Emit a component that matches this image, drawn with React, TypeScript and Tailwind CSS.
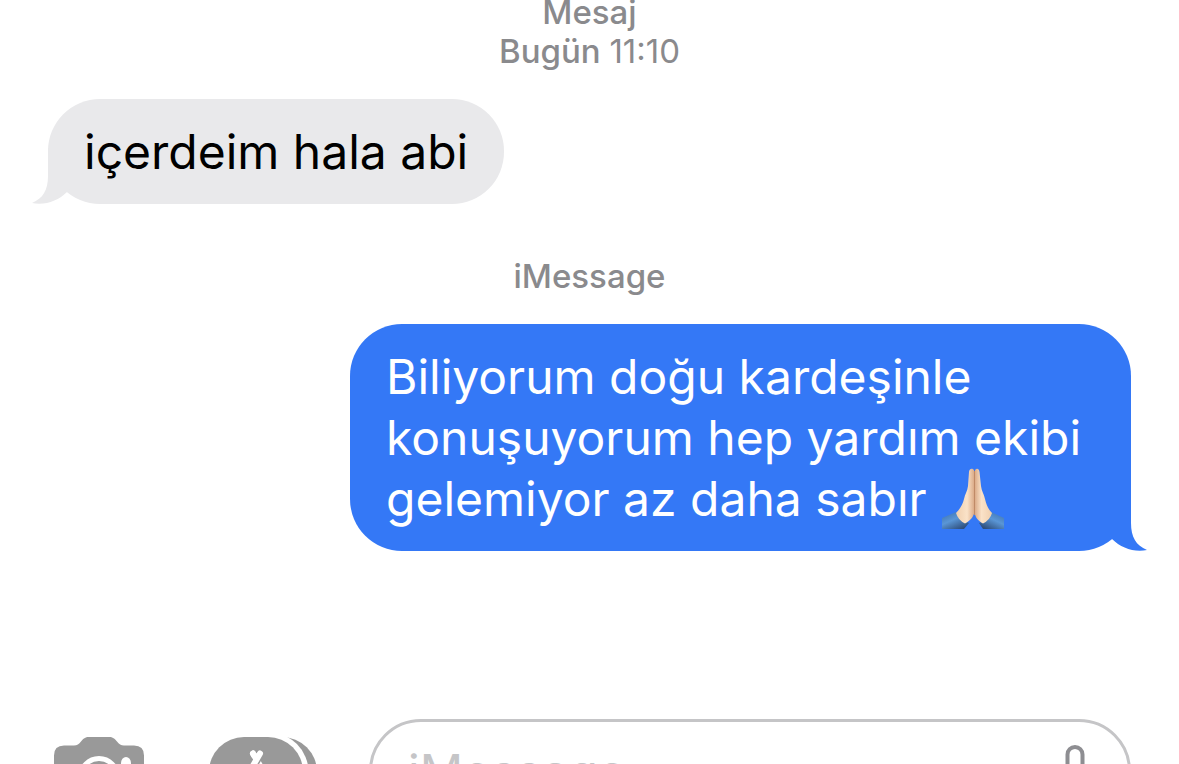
type BubbleSide = "in" | "out";

const Tail = ({ side }: { side: BubbleSide }) => (
    <svg
        aria-hidden="true"
        viewBox="0 0 60 56"
        className={
            side === "in"
                ? "absolute bottom-0 -left-4 h-14 w-[60px] fill-[#e9e9eb]"
                : "absolute bottom-0 -right-4 h-14 w-[60px] -scale-x-100 fill-[#3478f6]"
        }
    >
        <path d="M16 0V28C16 42 11 50.500 0 55C13 57.500 26 53 35 44L60 18V0Z" />
    </svg>
);

const Bubble = ({ side, children }: { side: BubbleSide; children: React.ReactNode }) => (
    <div
        className={
            side === "in"
                ? "relative max-w-[781px] self-start rounded-[52px] bg-[#e9e9eb] px-9 py-[22px] text-black"
                : "relative max-w-[781px] self-end rounded-[52px] bg-[#3478f6] px-9 py-[22px] text-white"
        }
    >
        <Tail side={side} />
        <p className="relative text-[48px] leading-[61px]">{children}</p>
    </div>
);

const FoldedHands = () => (
    <svg role="img" aria-label="🙏🏻" viewBox="0 0 62 61" className="ml-0.5 inline-block h-[61px] w-[62px] align-bottom">
        <defs>
            <linearGradient id="skinLeft" x1="0" x2="1">
                <stop offset="0" stopColor="#f0cfae" />
                <stop offset="0.6" stopColor="#fae2c8" />
                <stop offset="1" stopColor="#d9a885" />
            </linearGradient>
            <linearGradient id="skinRight" x1="1" x2="0">
                <stop offset="0" stopColor="#f0cfae" />
                <stop offset="0.6" stopColor="#fae2c8" />
                <stop offset="1" stopColor="#d9a885" />
            </linearGradient>
            <linearGradient id="sleeveLeft" x1="0" y1="0" x2="0.7" y2="1">
                <stop offset="0" stopColor="#3a6fae" />
                <stop offset="0.5" stopColor="#5a96d6" />
                <stop offset="1" stopColor="#2f4f7c" />
            </linearGradient>
            <linearGradient id="sleeveRight" x1="1" y1="0" x2="0.3" y2="1">
                <stop offset="0" stopColor="#3a6fae" />
                <stop offset="0.5" stopColor="#5a96d6" />
                <stop offset="1" stopColor="#2f4f7c" />
            </linearGradient>
        </defs>
        <path d="M0 50L14 44Q17 52 27 55L22 61H0Z" fill="url(#sleeveLeft)" />
        <path d="M62 50L49 44Q46 52 37 55L41 61H62Z" fill="url(#sleeveRight)" />
        <path
            d="M32 2C30.500 0 27.500 0 27 4L26 18C25.500 23 23 26 22 31C20.500 37 18 41 14 45Q16 52 23 55.500C28 53 31.500 49 32.500 44Z"
            fill="url(#skinLeft)"
        />
        <path
            d="M33 2C34.500 0 37 0 37.500 4L39 18C39.500 23 42 26 43 31C44.500 37 46 41 50 45Q48 52 41 55.500C36 53 33 49 32.500 44Z"
            fill="url(#skinRight)"
        />
        <path d="M32.500 3V47" stroke="#c08a67" strokeWidth="1" fill="none" />
    </svg>
);

const CameraIcon = () => (
    <svg aria-hidden="true" viewBox="0 0 90 70" className="h-[70px] w-[90px]">
        <path
            d="M10 8.500H20C23 8.500 25 7 27 4.500C29.500 1.500 31 0 35 0H55C59 0 60.500 1.500 63 4.500C65 7 67 8.500 70 8.500H80Q90 8.500 90 18.500V60Q90 70 80 70H10Q0 70 0 60V18.500Q0 8.500 10 8.500Z"
            fill="#999"
        />
        <circle cx="45" cy="40" r="18.500" fill="none" stroke="#fff" strokeWidth="5" />
        <ellipse cx="72" cy="26" rx="5" ry="6" fill="#fff" />
    </svg>
);

const AppStoreIcon = () => (
    <svg aria-hidden="true" viewBox="0 0 108 70" className="h-[70px] w-[108px]">
        <circle cx="73" cy="35" r="35" fill="#999" />
        <circle cx="60" cy="35" r="39.500" fill="#fff" />
        <rect width="94" height="70" rx="35" fill="#999" />
        <g fill="none" strokeLinecap="round">
            <path d="M44 16.500L61 46" stroke="#fff" strokeWidth="6" />
            <path d="M51 16.500L34 46" stroke="#999" strokeWidth="9" />
            <path d="M44 16.500L46 20M51 16.500L34 46M29 41H66" stroke="#fff" strokeWidth="6" />
        </g>
    </svg>
);

const MicIcon = () => (
    <svg
        aria-hidden="true"
        viewBox="0 0 36 53"
        className="h-[53px] w-9 fill-none stroke-[#8e8e92]"
        strokeWidth="4"
        strokeLinecap="round"
    >
        <rect x="10.500" y="2" width="15" height="32" rx="7.500" />
        <path d="M3 24V27A15 15 0 0 0 33 27V24M18 42V51M10 51H26" />
    </svg>
);

export default function App() {
    return (
        <main className="flex h-screen flex-col overflow-hidden bg-white px-12 font-['Inter',sans-serif]">
            <div className="-mt-[7px] shrink-0 text-center text-[33px] leading-[39px] font-medium text-[#8a8a8d]">
                <p>Mesaj</p>
                <p>
                    Bugün <time className="font-normal">11:10</time>
                </p>
            </div>

            <section className="mt-7 flex shrink-0 flex-col">
                <Bubble side="in">içerdeim hala abi</Bubble>
                <p className="mt-[53px] mb-7 text-center text-[33px] leading-[39px] font-medium text-[#8a8a8d]">
                    iMessage
                </p>
                <Bubble side="out">
                    Biliyorum doğu kardeşinle konuşuyorum hep yardım ekibi gelemiyor az daha sabır <FoldedHands />
                </Bubble>
            </section>

            {/* Composer */}
            <form className="mt-[168px] flex shrink-0 items-center pl-1.5" onSubmit={(e) => e.preventDefault()}>
                <button type="button" aria-label="Kamera">
                    <CameraIcon />
                </button>
                <button type="button" aria-label="Uygulamalar" className="mr-[52px] ml-[65px]">
                    <AppStoreIcon />
                </button>
                <div className="flex h-[105px] min-w-0 flex-1 items-center rounded-[52px] border-[3px] border-[#c5c5c7] pr-[35px] pl-9">
                    <input
                        type="text"
                        aria-label="iMessage"
                        placeholder="iMessage"
                        className="min-w-0 flex-1 bg-transparent text-[48px] leading-[61px] outline-none placeholder:text-[#c5c5c7]"
                    />
                    <button type="button" aria-label="Dikte">
                        <MicIcon />
                    </button>
                </div>
            </form>
        </main>
    );
}
